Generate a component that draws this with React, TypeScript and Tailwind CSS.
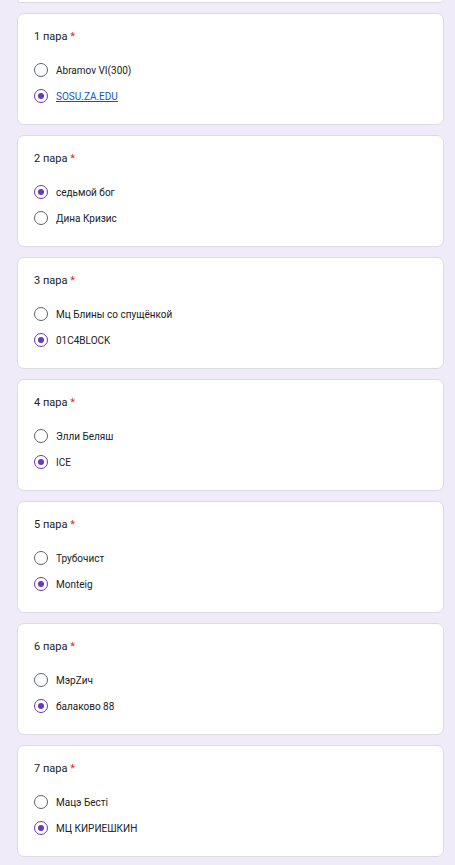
import React from "react";

type Question = {
  title: string;
  options: string[];
  selected: number;
  link?: boolean;
};

const questions: Question[] = [
  { title: "1 пара", options: ["Abramov VI(300)", "SOSU.ZA.EDU"], selected: 1, link: true },
  { title: "2 пара", options: ["седьмой бог", "Дина Кризис"], selected: 0 },
  { title: "3 пара", options: ["Мц Блины со спущёнкой", "01C4BLOCK"], selected: 1 },
  { title: "4 пара", options: ["Элли Беляш", "ICE"], selected: 1 },
  { title: "5 пара", options: ["Трубочист", "Monteig"], selected: 1 },
  { title: "6 пара", options: ["MэpZич", "балаково 88"], selected: 1 },
  { title: "7 пара", options: ["Мацэ Бесті", "МЦ КИРИЕШКИН"], selected: 1 },
];

function Radio({ checked }: { checked: boolean }) {
  return checked ? (
    <span className="w-[14px] h-[14px] rounded-full border-[1.5px] border-[#673ab7] flex items-center justify-center flex-shrink-0">
      <span className="w-[6px] h-[6px] rounded-full bg-[#673ab7]" />
    </span>
  ) : (
    <span className="w-[14px] h-[14px] rounded-full border-[1.5px] border-[#5f6368] flex-shrink-0" />
  );
}

function QuestionCard({ q }: { q: Question }) {
  return (
    <div className="h-[112px] bg-white rounded-[7px] border border-[#dadce0] px-[16px] pt-[16px] flex flex-col">
      <div className="text-[11px] leading-[14px] text-[#202124]">
        {q.title} <span className="text-[#d93025]">*</span>
      </div>
      <div className="flex flex-col gap-[6px] mt-[16px]">
        {q.options.map((opt, i) => (
          <div key={opt} className="h-[20px] flex items-center gap-[8px]">
            <Radio checked={i === q.selected} />
            {q.link && i === 1 ? (
              <span className="text-[10px] text-[#1155cc] underline">{opt}</span>
            ) : (
              <span className="text-[10px] text-[#202124]">{opt}</span>
            )}
          </div>
        ))}
      </div>
    </div>
  );
}

export default function App() {
  return (
    <div
      className="min-h-screen bg-[#f0ebf8] pl-[17px] pr-[11px] flex flex-col gap-[10px] pb-[8px]"
      style={{ fontFamily: "Roboto, 'Noto Sans', sans-serif" }}
    >
      {/* tail of the card above */}
      <div className="h-[3px] bg-white rounded-b-[7px] border border-t-0 border-[#dadce0]" />
      {questions.map((q) => (
        <QuestionCard key={q.title} q={q} />
      ))}
    </div>
  );
}
